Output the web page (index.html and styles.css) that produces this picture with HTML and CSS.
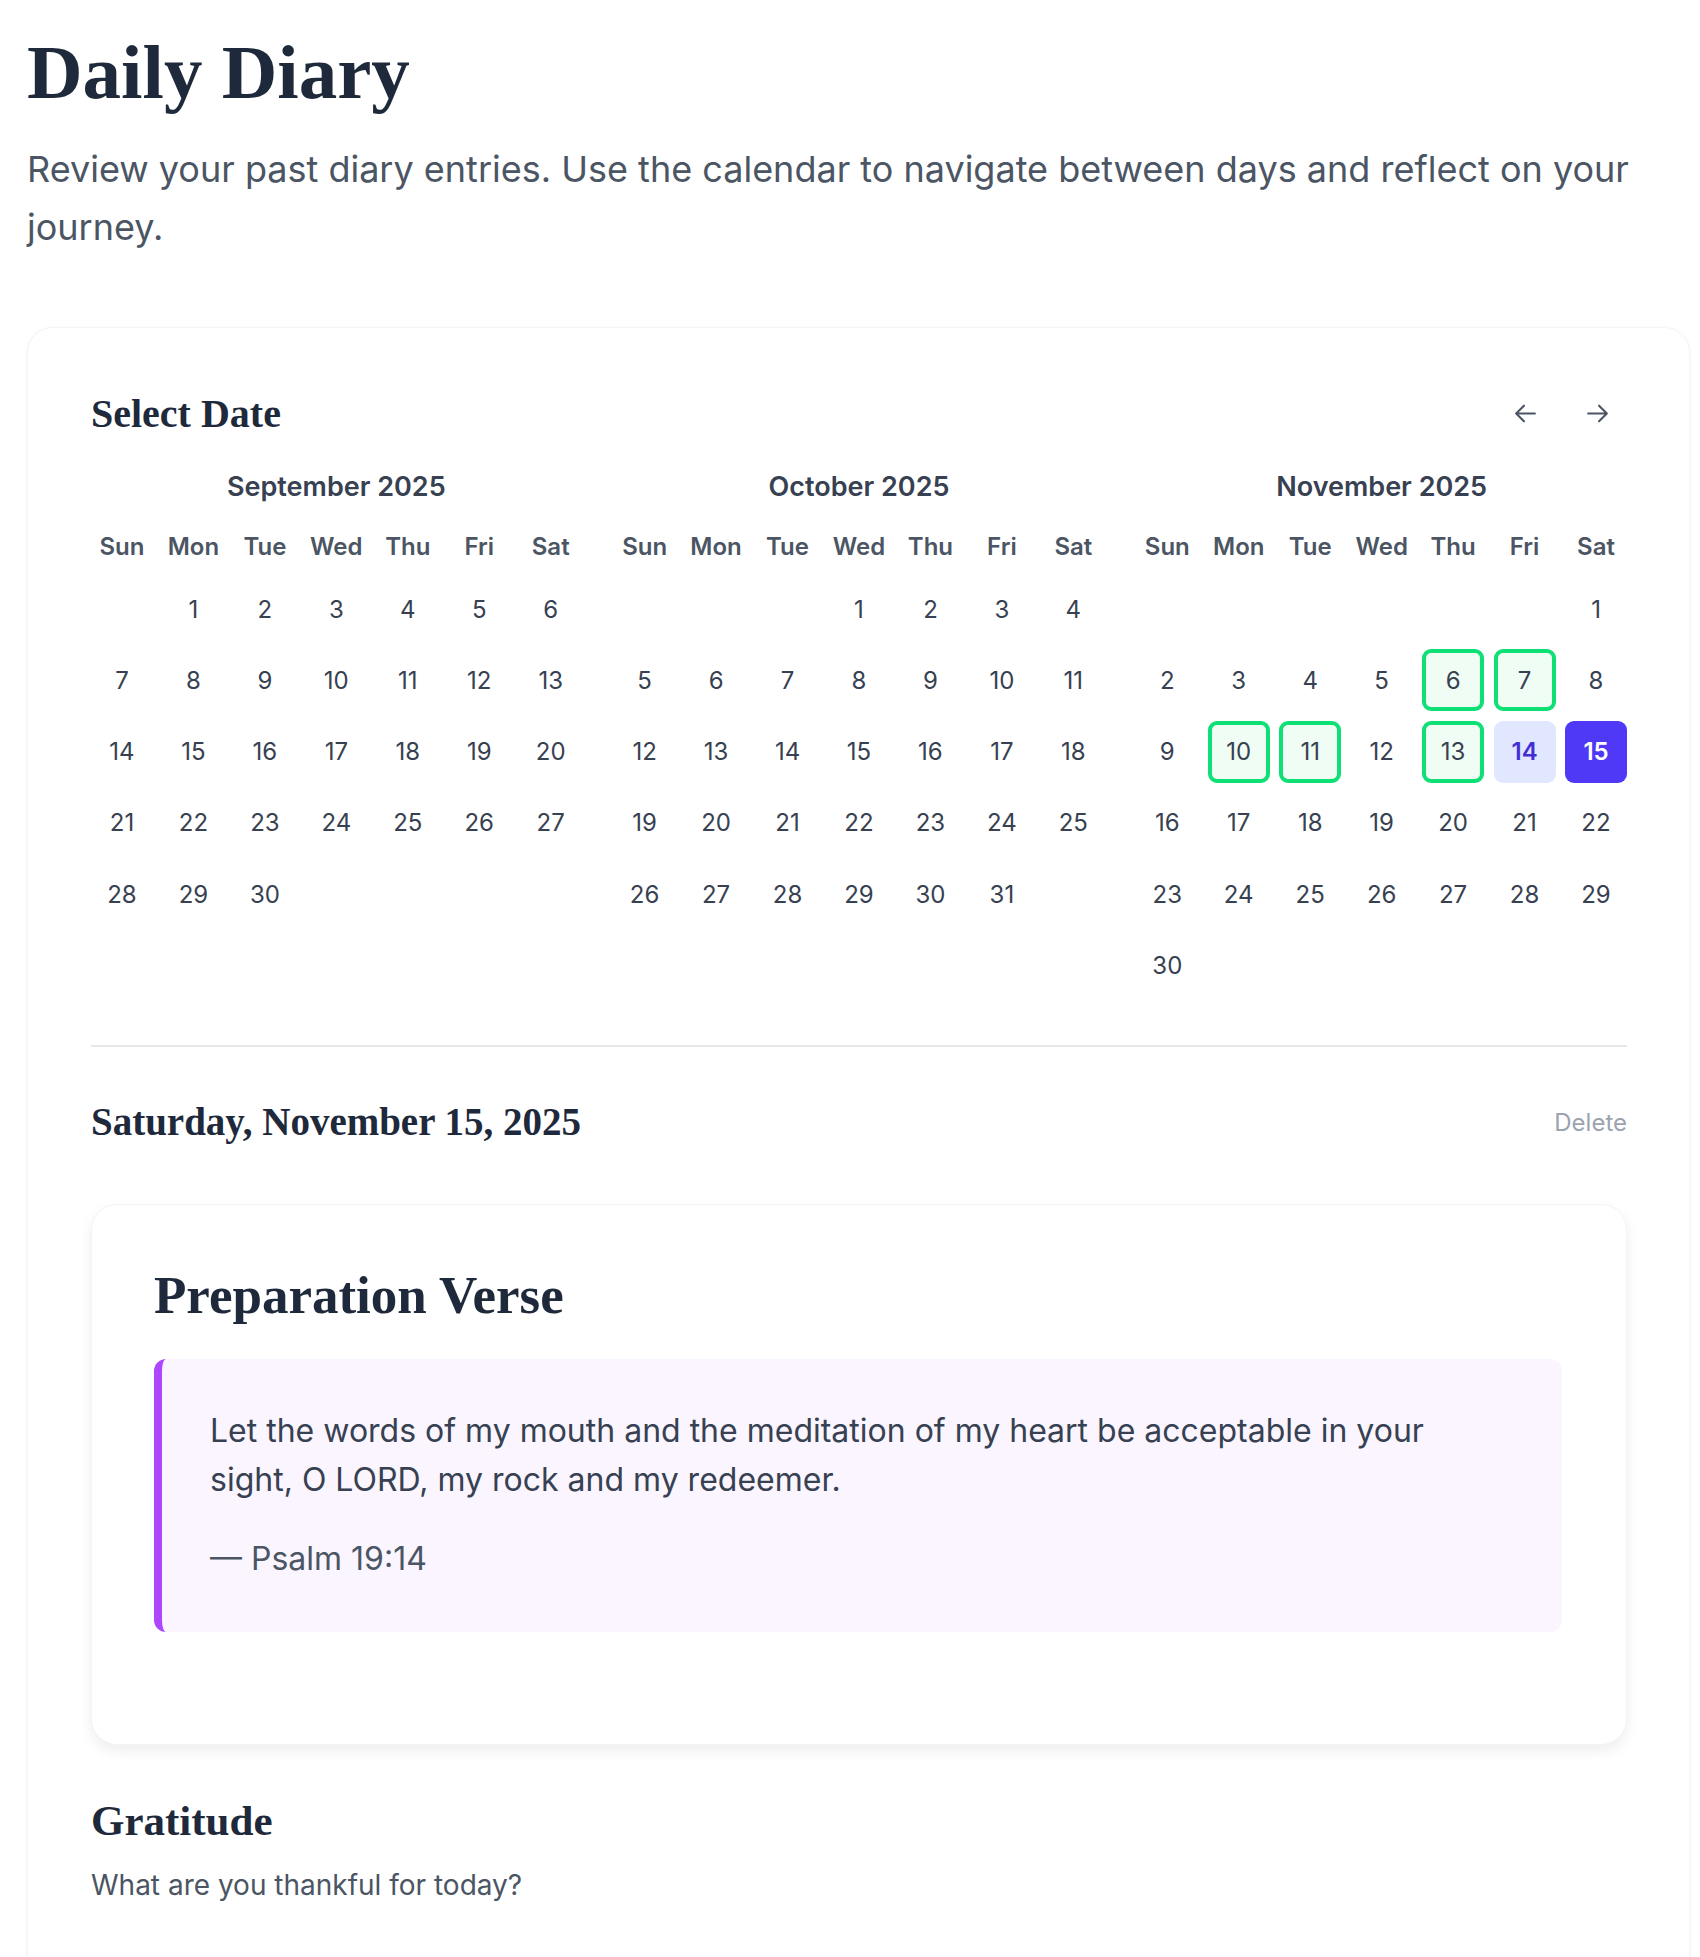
FILE: index.html
```html
<!DOCTYPE html>
<html lang="en">
<head>
  <meta charset="UTF-8" />
  <meta name="viewport" content="width=device-width, initial-scale=1.0"/>
  <title>Daily Diary</title>
  <link rel="stylesheet" href="styles.css">
</head>
<body>
  <div class="page">
    <h1 class="page-title">Daily Diary</h1>
    <p class="intro">Review your past diary entries. Use the calendar to navigate between days and reflect on your journey.</p>

    <section class="card">
      <header class="card-head">
        <h2 class="section-title">Select Date</h2>
        <div class="nav">
          <button class="nav-btn" aria-label="Previous month">
            <svg viewBox="0 0 24 24" fill="none" stroke="currentColor" stroke-width="2" stroke-linecap="round" stroke-linejoin="round"><path d="M10.5 19.5 3 12m0 0 7.5-7.5M3 12h18"/></svg>
          </button>
          <button class="nav-btn" aria-label="Next month">
            <svg viewBox="0 0 24 24" fill="none" stroke="currentColor" stroke-width="2" stroke-linecap="round" stroke-linejoin="round"><path d="M13.5 4.5 21 12m0 0-7.5 7.5M21 12H3"/></svg>
          </button>
        </div>
      </header>

      <div class="months">
        <!-- September -->
        <div class="month">
          <div class="month-name">September 2025</div>
          <div class="weekdays"><span>Sun</span><span>Mon</span><span>Tue</span><span>Wed</span><span>Thu</span><span>Fri</span><span>Sat</span></div>
          <div class="days">
            <span></span><span class="day">1</span><span class="day">2</span><span class="day">3</span><span class="day">4</span><span class="day">5</span><span class="day">6</span>
            <span class="day">7</span><span class="day">8</span><span class="day">9</span><span class="day">10</span><span class="day">11</span><span class="day">12</span><span class="day">13</span>
            <span class="day">14</span><span class="day">15</span><span class="day">16</span><span class="day">17</span><span class="day">18</span><span class="day">19</span><span class="day">20</span>
            <span class="day">21</span><span class="day">22</span><span class="day">23</span><span class="day">24</span><span class="day">25</span><span class="day">26</span><span class="day">27</span>
            <span class="day">28</span><span class="day">29</span><span class="day">30</span>
          </div>
        </div>

        <!-- October -->
        <div class="month">
          <div class="month-name">October 2025</div>
          <div class="weekdays"><span>Sun</span><span>Mon</span><span>Tue</span><span>Wed</span><span>Thu</span><span>Fri</span><span>Sat</span></div>
          <div class="days">
            <span></span><span></span><span></span><span class="day">1</span><span class="day">2</span><span class="day">3</span><span class="day">4</span>
            <span class="day">5</span><span class="day">6</span><span class="day">7</span><span class="day">8</span><span class="day">9</span><span class="day">10</span><span class="day">11</span>
            <span class="day">12</span><span class="day">13</span><span class="day">14</span><span class="day">15</span><span class="day">16</span><span class="day">17</span><span class="day">18</span>
            <span class="day">19</span><span class="day">20</span><span class="day">21</span><span class="day">22</span><span class="day">23</span><span class="day">24</span><span class="day">25</span>
            <span class="day">26</span><span class="day">27</span><span class="day">28</span><span class="day">29</span><span class="day">30</span><span class="day">31</span>
          </div>
        </div>

        <!-- November -->
        <div class="month">
          <div class="month-name">November 2025</div>
          <div class="weekdays"><span>Sun</span><span>Mon</span><span>Tue</span><span>Wed</span><span>Thu</span><span>Fri</span><span>Sat</span></div>
          <div class="days">
            <span></span><span></span><span></span><span></span><span></span><span></span><span class="day">1</span>
            <span class="day">2</span><span class="day">3</span><span class="day">4</span><span class="day">5</span><span class="day has-entry">6</span><span class="day has-entry">7</span><span class="day">8</span>
            <span class="day">9</span><span class="day has-entry">10</span><span class="day has-entry">11</span><span class="day">12</span><span class="day has-entry">13</span><span class="day today">14</span><span class="day selected">15</span>
            <span class="day">16</span><span class="day">17</span><span class="day">18</span><span class="day">19</span><span class="day">20</span><span class="day">21</span><span class="day">22</span>
            <span class="day">23</span><span class="day">24</span><span class="day">25</span><span class="day">26</span><span class="day">27</span><span class="day">28</span><span class="day">29</span>
            <span class="day">30</span>
          </div>
        </div>
      </div>

      <hr class="divider">

      <div class="entry-head">
        <h2 class="section-title date-title">Saturday, November 15, 2025</h2>
        <button class="delete-btn">Delete</button>
      </div>

      <div class="verse-card">
        <h3 class="verse-title">Preparation Verse</h3>
        <blockquote class="verse">
          <p>Let the words of my mouth and the meditation of my heart be acceptable in your sight, O LORD, my rock and my redeemer.</p>
          <cite>— Psalm 19:14</cite>
        </blockquote>
      </div>

      <div class="block">
        <h2 class="block-title">Gratitude</h2>
        <p class="block-hint">What are you thankful for today?</p>
      </div>
    </section>
  </div>
</body>
</html>
```

FILE: styles.css
```css
body {
  margin: 0;
  font-family: Inter, "Noto Sans", sans-serif;
  background-color: #fff;
  color: #1e293b;
}
.page {
  padding: 27px 10px 0 27px;
}
.page-title {
  margin: 0;
  font-family: "Liberation Serif", serif;
  font-size: 77px;
  line-height: 90px;
  font-weight: 700;
  color: #1e293b;
}
.intro {
  margin: 23px 0 0;
  max-width: 1620px;
  font-size: 36px;
  line-height: 58px;
  color: #4b5563;
}
.card {
  margin-top: 71px;
  background-color: #fff;
  border: 1px solid #f4f5f6;
  border-radius: 26px;
  box-shadow: 0 1px 4px rgba(0,0,0,0.05);
  padding: 62px 62px 200px 63px;
}
.card-head {
  display: flex;
  justify-content: space-between;
  align-items: center;
  height: 47px;
}
.section-title {
  margin: 0;
  font-family: "Liberation Serif", serif;
  font-size: 40px;
  line-height: 48px;
  font-weight: 700;
  color: #1e293b;
}
.date-title {
  font-size: 39px;
}
.nav {
  display: flex;
  gap: 20px;
  margin-right: 4px;
}
.nav-btn {
  width: 52px;
  height: 52px;
  display: flex;
  align-items: center;
  justify-content: center;
  border: none;
  background: none;
  padding: 0;
  color: #4b5563;
  cursor: pointer;
}
.nav-btn svg {
  width: 25px;
  height: 25px;
}
.months {
  display: grid;
  grid-template-columns: repeat(3, 1fr);
  column-gap: 32px;
  margin-top: 32px;
}
.month-name {
  text-align: center;
  font-size: 27px;
  line-height: 35px;
  font-weight: 600;
  color: #374151;
}
.weekdays,
.days {
  display: grid;
  grid-template-columns: repeat(7, 1fr);
  column-gap: 9.5px;
}
.weekdays {
  margin-top: 24px;
  height: 36px;
  align-items: center;
  text-align: center;
  font-size: 24px;
  font-weight: 600;
  color: #4b5563;
}
.days {
  margin-top: 14px;
  grid-auto-rows: 62px;
  row-gap: 9.3px;
}
.day {
  display: flex;
  align-items: center;
  justify-content: center;
  border-radius: 9px;
  font-size: 24px;
  color: #374151;
}
.day.has-entry {
  background-color: #effdf4;
  border: 4px solid #0ee076;
}
.day.today {
  background-color: #e0e7ff;
  color: #432dd7;
  font-weight: 600;
}
.day.selected {
  background-color: #4f39f6;
  color: #fff;
  font-weight: 600;
}
.divider {
  margin: 49px 0 0;
  border: none;
  border-top: 2px solid #e5e7eb;
}
.entry-head {
  display: flex;
  justify-content: space-between;
  align-items: center;
  margin-top: 51px;
}
.delete-btn {
  border: none;
  background: none;
  padding: 0;
  font-family: Inter, sans-serif;
  font-size: 24px;
  color: #9ca3af;
  cursor: pointer;
}
.verse-card {
  margin-top: 58px;
  background-color: #fff;
  border: 1px solid #f3f4f6;
  border-radius: 26px;
  box-shadow: 0 6px 14px rgba(0,0,0,0.07);
  padding: 59px 64px 112px 62px;
}
.verse-title {
  margin: 0;
  font-family: "Liberation Serif", serif;
  font-size: 53px;
  line-height: 62px;
  font-weight: 700;
  color: #1e293b;
}
.verse {
  margin: 33px 0 0;
  background-color: #faf5ff;
  border-left: 8px solid #ad46ff;
  border-radius: 12px;
  padding: 48px 48px 50px 48px;
}
.verse p {
  margin: 0;
  max-width: 1240px;
  font-size: 32px;
  line-height: 48.5px;
  color: #374151;
}
.verse cite {
  display: block;
  margin-top: 31px;
  font-style: normal;
  font-size: 32px;
  line-height: 47px;
  color: #4b5563;
}
.block {
  margin-top: 49px;
}
.block-title {
  margin: 0;
  font-family: "Liberation Serif", serif;
  font-size: 43px;
  line-height: 54px;
  font-weight: 700;
  color: #1e293b;
}
.block-hint {
  margin: 17px 0 0;
  font-size: 28px;
  line-height: 40px;
  color: #4b5563;
}
```
